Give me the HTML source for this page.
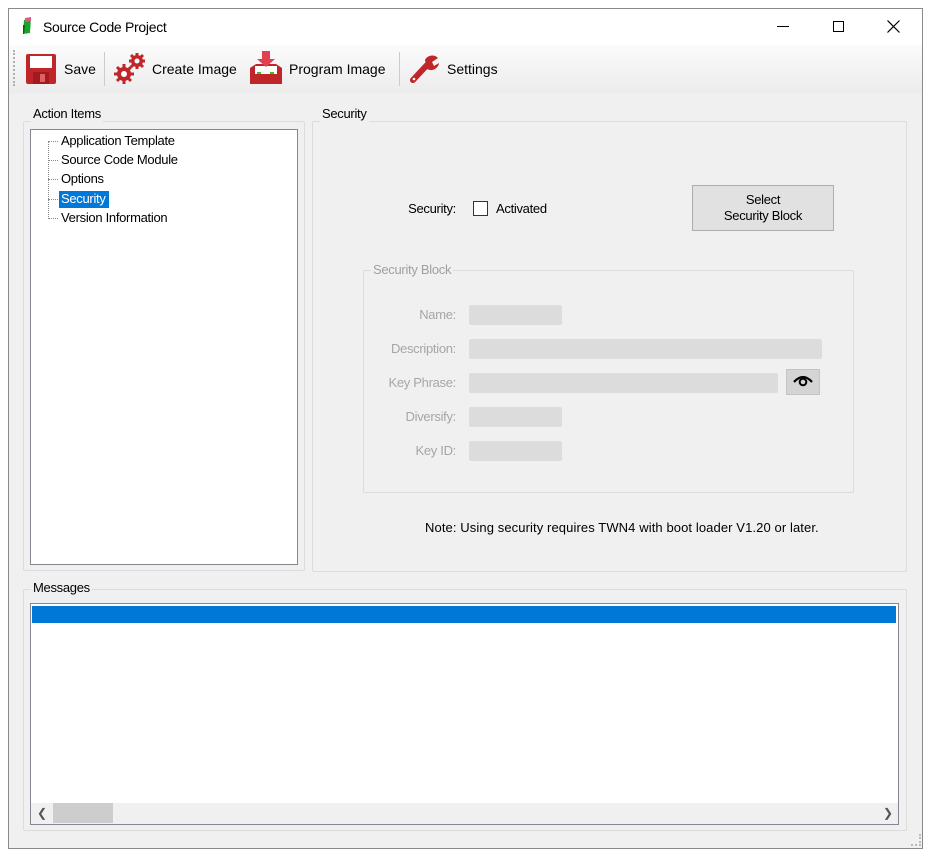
<!DOCTYPE html>
<html><head><meta charset="utf-8"><style>
*{box-sizing:border-box;margin:0;padding:0}
body{width:929px;height:852px;background:#fff;position:relative;overflow:hidden;font-family:"Liberation Sans",sans-serif;font-size:13px;color:#000}
.a{position:absolute}
.t{position:absolute;white-space:nowrap;letter-spacing:-0.3px;line-height:16px}
.grp{position:absolute;border:1px solid #dcdcdc;border-radius:2px}
.lbl{position:absolute;background:#f0f0f0;padding:0 2px;white-space:nowrap;letter-spacing:-0.3px;line-height:16px}
.fld{position:absolute;background:#dcdcdc;border-radius:2px}
.gl{position:absolute;color:#a6a6a6;text-align:right;width:100px;white-space:nowrap;letter-spacing:-0.3px;line-height:16px}
</style></head><body>
<div class="a" style="left:8px;top:8px;width:915px;height:841px;border:1px solid #8a8a8a;background:#f0f0f0"></div>
<div class="a" style="left:9px;top:9px;width:913px;height:36px;background:#fff"></div>
<div class="a" style="left:9px;top:45px;width:913px;height:48px;background:linear-gradient(#fbfbfb,#ececec)"></div>
<svg class="a" style="left:20px;top:17px" width="14" height="18" viewBox="0 0 14 18"><path d="M4 3 L11 1 L10 16 L3 17 Z" fill="#1aa52a"/><path d="M5 1 L11 0 L11 4 L5 5 Z" fill="#d85a8a"/><path d="M3 8 L5 8 L4 17 L3 17Z" fill="#0a5c14"/></svg>
<div class="t" style="left:43px;top:19px;font-size:14px">Source Code Project</div>
<div class="a" style="left:777px;top:26px;width:12px;height:1px;background:#000"></div>
<div class="a" style="left:833px;top:21px;width:11px;height:11px;border:1px solid #000"></div>
<svg class="a" style="left:887px;top:20px" width="13" height="13"><path d="M0.5 0.5L12.5 12.5M12.5 0.5L0.5 12.5" stroke="#000" stroke-width="1.2"/></svg>
<div class="a" style="left:13px;top:50px;width:2px;height:36px;border-left:2px dotted #b0b0b0"></div>
<svg class="a" style="left:25px;top:53px" width="32" height="32" viewBox="0 0 32 32"><rect x="1" y="1" width="30" height="30" rx="2" fill="#c0252a"/><rect x="5" y="3" width="22" height="12" fill="#fff"/><rect x="8" y="19" width="16" height="12" fill="#a01a1f"/><rect x="15" y="21" width="5" height="8" fill="#e06065"/></svg>
<div class="t" style="left:64px;top:61px;font-size:14px;letter-spacing:0">Save</div>
<div class="a" style="left:104px;top:52px;width:1px;height:34px;background:#ccc"></div>
<svg class="a" style="left:113px;top:51px" width="34" height="34" viewBox="0 0 34 34"><g fill="#c0252a"><circle cx="11" cy="23" r="7"/><circle cx="24" cy="10" r="6"/></g><g stroke="#c0252a" stroke-width="3"><path d="M11 13v20M1 23h20M4 16l14 14M18 16L4 30"/><path d="M24 2v16M16 10h16M18 4l12 12M30 4L18 16"/></g><circle cx="11" cy="23" r="3" fill="#fff"/><circle cx="24" cy="10" r="2.5" fill="#fff"/></svg>
<div class="t" style="left:152px;top:61px;font-size:14px;letter-spacing:0">Create Image</div>
<svg class="a" style="left:248px;top:50px" width="36" height="36" viewBox="0 0 36 36"><path d="M2 18 L8 14 L28 14 L34 18 L34 34 L2 34 Z" fill="#c0252a"/><rect x="7" y="16" width="22" height="8" fill="#fff"/><rect x="9" y="22" width="4" height="2" fill="#2c2"/><rect x="22" y="22" width="4" height="2" fill="#2c2"/><path d="M14 1h8v8h5l-9 8-9-8h5z" fill="#e04050"/></svg>
<div class="t" style="left:289px;top:61px;font-size:14px;letter-spacing:0">Program Image</div>
<div class="a" style="left:399px;top:52px;width:1px;height:34px;background:#ccc"></div>
<svg class="a" style="left:409px;top:52px" width="32" height="32" viewBox="0 0 32 32"><path d="M4 28 L18 13" stroke="#c0252a" stroke-width="6" stroke-linecap="round"/><path d="M16 8 A8 8 0 0 1 29 6 L23 10 L25 14 L30 11 A8 8 0 0 1 18 17 Z" fill="#c0252a"/><circle cx="5" cy="27" r="1.3" fill="#fff"/></svg>
<div class="t" style="left:447px;top:61px;font-size:14px;letter-spacing:0">Settings</div>
<div class="grp" style="left:23px;top:121px;width:282px;height:450px"></div>
<div class="lbl" style="left:31px;top:106px">Action Items</div>
<div class="a" style="left:30px;top:129px;width:268px;height:436px;background:#fff;border:1px solid #828790"></div>
<div class="a" style="left:48px;top:141px;width:1px;height:78px;border-left:1px dotted #888"></div>
<div class="a" style="left:48px;top:141px;width:10px;border-top:1px dotted #888"></div>
<div class="a" style="left:48px;top:160px;width:10px;border-top:1px dotted #888"></div>
<div class="a" style="left:48px;top:179px;width:10px;border-top:1px dotted #888"></div>
<div class="a" style="left:48px;top:199px;width:10px;border-top:1px dotted #888"></div>
<div class="a" style="left:48px;top:218px;width:10px;border-top:1px dotted #888"></div>
<div class="a" style="left:59px;top:191px;width:50px;height:17px;background:#0078d7"></div>
<div class="t" style="left:61px;top:133px">Application Template</div>
<div class="t" style="left:61px;top:152px">Source Code Module</div>
<div class="t" style="left:61px;top:171px">Options</div>
<div class="t" style="left:61px;top:191px;color:#fff">Security</div>
<div class="t" style="left:61px;top:210px">Version Information</div>
<div class="grp" style="left:312px;top:121px;width:595px;height:451px"></div>
<div class="lbl" style="left:320px;top:106px">Security</div>
<div class="t" style="left:356px;top:201px;width:100px;text-align:right">Security:</div>
<div class="a" style="left:473px;top:201px;width:15px;height:15px;border:1px solid #333;background:#fff"></div>
<div class="t" style="left:496px;top:201px">Activated</div>
<div class="a" style="left:692px;top:185px;width:142px;height:46px;background:#e1e1e1;border:1px solid #adadad;text-align:center;line-height:16px;padding-top:6px;letter-spacing:-0.3px">Select<br>Security Block</div>
<div class="grp" style="left:363px;top:270px;width:491px;height:223px"></div>
<div class="lbl" style="left:371px;top:262px;color:#a0a0a0">Security Block</div>
<div class="gl" style="left:356px;top:307px">Name:</div>
<div class="gl" style="left:356px;top:341px">Description:</div>
<div class="gl" style="left:356px;top:375px">Key Phrase:</div>
<div class="gl" style="left:356px;top:409px">Diversify:</div>
<div class="gl" style="left:356px;top:443px">Key ID:</div>
<div class="fld" style="left:469px;top:305px;width:93px;height:20px"></div>
<div class="fld" style="left:469px;top:339px;width:353px;height:20px"></div>
<div class="fld" style="left:469px;top:373px;width:309px;height:20px"></div>
<div class="fld" style="left:469px;top:407px;width:93px;height:20px"></div>
<div class="fld" style="left:469px;top:441px;width:93px;height:20px"></div>
<div class="a" style="left:786px;top:369px;width:34px;height:26px;background:#d4d4d4;border:1px solid #c4c4c4"></div>
<svg class="a" style="left:792px;top:374px" width="22" height="14" viewBox="0 0 22 14"><path d="M2 8 Q11 -2 20 8" fill="none" stroke="#000" stroke-width="2.2"/><circle cx="11" cy="8" r="3.3" fill="none" stroke="#000" stroke-width="2"/></svg>
<div class="t" style="left:425px;top:520px;letter-spacing:0.1px">Note: Using security requires TWN4 with boot loader V1.20 or later.</div>
<div class="grp" style="left:23px;top:589px;width:884px;height:242px"></div>
<div class="lbl" style="left:31px;top:580px">Messages</div>
<div class="a" style="left:30px;top:603px;width:869px;height:222px;background:#fff;border:1px solid #828790"></div>
<div class="a" style="left:32px;top:606px;width:864px;height:17px;background:#0078d7"></div>
<div class="a" style="left:31px;top:803px;width:867px;height:21px;background:#f0f0f0"></div>
<div class="a" style="left:53px;top:803px;width:60px;height:20px;background:#cdcdcd"></div>
<div class="t" style="left:37px;top:805px;font-size:12px;color:#555">&#10094;</div>
<div class="t" style="left:883px;top:805px;font-size:12px;color:#555">&#10095;</div>
<div class="a" style="left:911px;top:834px;width:10px;height:12px;border-right:2px dotted #bbb;border-bottom:2px dotted #bbb"></div>
</body></html>
